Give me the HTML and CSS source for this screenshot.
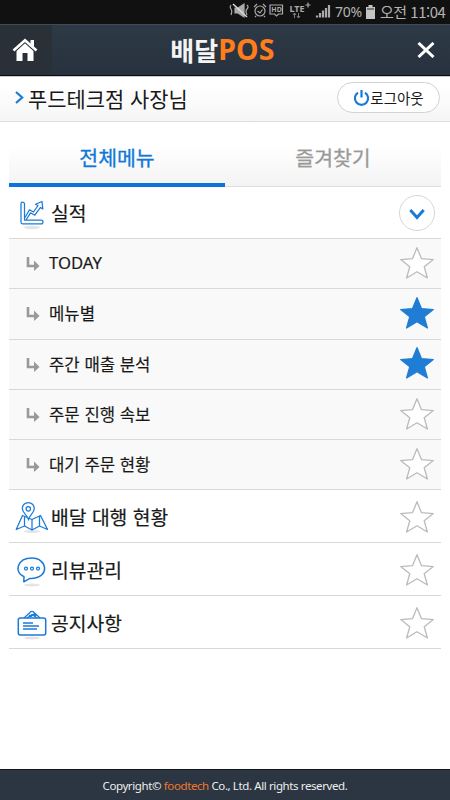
FILE: index.html
```html
<!DOCTYPE html>
<html lang="ko">
<head>
<meta charset="utf-8">
<title>배달POS</title>
<link rel="stylesheet" href="styles.css">
</head>
<body>
<svg class="defs" width="0" height="0" aria-hidden="true">
  <symbol id="star" viewBox="0 0 36 34"><path d="M18 1.700 22.400 12.600 34.300 13.600 25.200 20.800 28.400 32 18 25.800 7.600 32 10.800 20.800 1.700 13.600 13.600 12.600Z" stroke-linejoin="round"/></symbol>
  <symbol id="sub" viewBox="0 0 14 15"><path d="M2 1V10H10" fill="none" stroke="#999" stroke-width="2.600"/><path d="M8 4.500 13.500 10 8 15Z" fill="#999"/></symbol>
</svg>
<div class="app">
  <div class="status">
    <svg width="110" height="24" viewBox="0 0 110 24" fill="none" stroke="#aaa" stroke-width="1.2">
      <path d="M6 8H9L15 4V17L9 13H6Z" fill="#aaa"/><path d="M4 4 18 17" stroke="#ddd" stroke-width="1.5"/><path d="M2 5Q.5 7 2 9T2 15M18 5Q20 7 18 9T18 15"/>
      <circle cx="31" cy="11" r="5"/><path d="M28.500 11 31 13 33.500 9.500M25 7 28 4M34 4 37 7M27 16 26 17M35 16 36 17"/>
      <path d="M41 5H53.500V14H49.500L47.500 16 45.500 14H41Z"/>
      <text x="42.300" y="12.400" class="status-hd">HD</text>
      <text x="60.500" y="11.500" class="status-lte">LTE</text>
      <path d="M76.500 5H81.500M79 2.500V7.500"/>
      <path d="M65.500 18V13M64 15 65.500 13 67 15M69.500 13V18M68 16 69.500 18 71 16" stroke-width=".9" stroke="#888"/>
      <path d="M88 17.500V15.500M91 17.500V13M94 17.500V10.500M97 17.500V8M100 17.500V5" stroke-width="2.200"/>
    </svg>
    <span class="pct">70%</span>
    <svg class="batt" width="9" height="14" viewBox="0 0 9 14"><path d="M2.500 0H6.500V2H9V14H0V2H2.500Z" fill="#c4c4c4"/><path d="M1 3H8V5H1Z" fill="#777"/></svg>
    <span class="clock">오전 11:04</span>
  </div>
  <header class="header">
    <a class="home"><svg width="26" height="24" viewBox="0 0 26 24"><path d="M13 4.500 21.500 12V23H15.500V15H10.500V23H4.500V12Z" fill="#fff"/><path d="M1.500 12.500 13 2 24.500 12.500" fill="none" stroke="#2a3038" stroke-width="5"/><path d="M1.500 12.500 13 2.200 24.500 12.500" fill="none" stroke="#fff" stroke-width="2.600"/><path d="M18.500 2H22V9L18.500 6Z" fill="#fff"/></svg></a>
    <h1 class="logo"><span class="logo-ko">배달</span><span class="logo-en">POS</span></h1>
    <svg class="close" width="18" height="16" viewBox="0 0 18 16"><path d="M1.500 1 16.500 15M16.500 1 1.500 15" stroke="#fff" stroke-width="3"/></svg>
  </header>
  <div class="user">
    <svg width="9" height="13" viewBox="0 0 9 13"><path d="M1 1 7.200 6.500 1 12" fill="none" stroke="#1b7ad6" stroke-width="2.200"/></svg>
    <span class="user-name">푸드테크점 사장님</span>
    <a class="logout"><svg width="17" height="18" viewBox="0 0 17 18" fill="none" stroke="#1b7ad6" stroke-width="2.200"><path d="M5 3.600A6.600 6.600 0 1 0 12 3.600M8.500 1V8.500"/></svg><span>로그아웃</span></a>
  </div>
  <main class="content">
    <nav class="tabs"><a class="tab active">전체메뉴</a><a class="tab">즐겨찾기</a></nav>
    <div class="row head">
      <svg class="icon" width="34" height="34" viewBox="0 0 34 34"><ellipse cx="17" cy="31.500" rx="8" ry="1.800" class="shade"/><path d="M6 7.500Q6 6 7.500 6T9.500 7.500V24H26Q28 24 28 26T26 27.800H7.500Q6 27.800 6 26Z"/><path d="M10 21.500 14.500 13.800 18.500 16 23 9.500 20.500 8.300 27 5.500 27.800 13 25.500 11.400 19.800 19.200 15.500 16.800 11 24"/></svg>
      <span class="label">실적</span>
      <span class="toggle"><svg width="16" height="12" viewBox="0 0 16 12"><path d="M1.300 2 8 9.500 14.700 2" fill="none" stroke="#1b7ad6" stroke-width="3"/></svg></span>
    </div>
    <div class="row sub"><svg class="arrow"><use href="#sub"/></svg><span class="label today">TODAY</span><svg class="star"><use href="#star"/></svg></div>
    <div class="row sub"><svg class="arrow"><use href="#sub"/></svg><span class="label">메뉴별</span><svg class="star on"><use href="#star"/></svg></div>
    <div class="row sub"><svg class="arrow"><use href="#sub"/></svg><span class="label">주간 매출 분석</span><svg class="star on"><use href="#star"/></svg></div>
    <div class="row sub"><svg class="arrow"><use href="#sub"/></svg><span class="label">주문 진행 속보</span><svg class="star"><use href="#star"/></svg></div>
    <div class="row sub"><svg class="arrow"><use href="#sub"/></svg><span class="label">대기 주문 현황</span><svg class="star"><use href="#star"/></svg></div>
    <div class="row main">
      <svg class="icon" width="34" height="34" viewBox="0 0 34 34"><ellipse cx="17" cy="31.500" rx="8" ry="1.500" class="shade"/><path d="M7.500 15.500 1.200 29.500 9.500 26 17 30 24.500 26 32.500 29.500 25.500 15.500 17 19.500 7.500 15.500ZM9.500 17V26M17 20V30M24.500 16.500V26"/><path d="M13.500 20C13 15 7.300 13.500 7.300 8.500A6 6 0 0 1 19.300 8.500C19.300 13.500 14 15 13.500 20Z" fill="#fff"/><circle cx="13.300" cy="8.800" r="2.200"/></svg>
      <span class="label">배달 대행 현황</span><svg class="star"><use href="#star"/></svg>
    </div>
    <div class="row main">
      <svg class="icon" width="34" height="34" viewBox="0 0 34 34"><ellipse cx="17" cy="32" rx="8" ry="1.500" class="shade"/><path d="M9 23.800C-1.500 19.500 2 5 17 5S35.500 24.500 17 25.400H15L8.800 28.800Z" stroke-width="1.500"/><circle cx="11" cy="15.500" r="1.500"/><circle cx="17" cy="15.500" r="1.500"/><circle cx="23" cy="15.500" r="1.500"/></svg>
      <span class="label">리뷰관리</span><svg class="star"><use href="#star"/></svg>
    </div>
    <div class="row main">
      <svg class="icon" width="34" height="34" viewBox="0 0 34 34"><ellipse cx="17" cy="32" rx="8" ry="1.500" class="shade"/><rect x="3.300" y="12" width="27.400" height="17" rx="2" stroke-width="1.500"/><path d="M9 12 15 6.500A2.300 2.300 0 0 1 19 6.500L25 12M12 12 17 8.500 22 12M14 9 16 10.500 19 8 21 10"/><path d="M8 17H18M8 20H24M8 23H22" stroke-width="1.400"/></svg>
      <span class="label">공지사항</span><svg class="star"><use href="#star"/></svg>
    </div>
  </main>
  <footer class="footer"><span>Copyright© <b>foodtech</b> Co., Ltd. All rights reserved.</span></footer>
</div>
</body>
</html>
```

FILE: styles.css
```css
* { box-sizing: border-box; }
body {
  margin: 0;
  background: #fff;
  font-family: "Noto Sans CJK KR", "Noto Sans", sans-serif;
  color: #181818;
}
svg { flex: none; display: block; }
.defs { position: absolute; }
.app { display: flex; flex-direction: column; width: 450px; height: 800px; overflow: hidden; }

.status {
  display: flex; align-items: center; height: 24px; flex: none;
  padding-left: 229px; background: #111; color: #b4b4b4;
  font-size: 15px; line-height: 24px; white-space: nowrap;
}
.status-hd { font: bold 7px "Noto Sans", sans-serif; fill: #aaa; stroke: none; }
.status-lte { font: bold 9px "Noto Sans", sans-serif; fill: #aaa; stroke: none; }
.pct { width: 31px; margin-left: -4px; font-family: "Noto Sans", sans-serif; font-size: 14px; letter-spacing: -.3px; }
.batt { margin-right: 5px; }
.clock { letter-spacing: -.5px; }

.header {
  display: flex; align-items: center; justify-content: space-between; flex: none;
  height: 52px; padding-right: 15px;
  background: linear-gradient(#2d3945, #27323e);
  border-top: 1px solid #404b58; border-bottom: 1px solid #080c14;
}
.home { display: flex; align-items: center; justify-content: center; width: 52px; height: 50px; padding-right: 2px; background: #2a3038; }
.logo { display: flex; align-items: center; margin: 0 24px 0 0; height: 50px; font-weight: bold; line-height: 50px; }
.logo-ko { font-size: 26px; color: #f4f4f4; }
.logo-en { font-family: "Noto Sans", sans-serif; font-size: 28.500px; color: #ff7d1a; letter-spacing: .2px; margin-top: -2px; }

.user {
  display: flex; align-items: center; flex: none; height: 46px; padding: 0 10px 3px 15px;
  background: linear-gradient(#fff 20%, #f5f5f5); border-top: 1px solid #ccc; border-bottom: 1px solid #dedede;
}
.user-name { margin-left: 4px; font-size: 20.900px; line-height: 40px; white-space: nowrap; }
.logout {
  display: flex; align-items: center; justify-content: center; width: 103px; height: 31px; margin-left: auto;
  border: 1px solid #d2d2d2; border-radius: 16px; background: #fff; font-size: 14.500px; line-height: 28px;
}

.content { flex: 1; margin: 14px 9px 0; }
.tabs { display: flex; height: 51px; background: linear-gradient(#fff 20%, #f3f3f3); }
.tab {
  flex: 1; text-align: center; font-size: 20.500px; line-height: 43px; color: #999;
  border-bottom: 1px solid #ddd; -webkit-text-stroke: .3px;
}
.active { color: #1178d8; border-bottom: 4px solid #0b74d8; }
.row { display: flex; align-items: center; height: 52.700px; padding: 0 6px; border-bottom: 1px solid #d8d8d8; }
.row .label { font-size: 19.300px; line-height: 30px; -webkit-text-stroke: .2px; margin-left: 2px; white-space: nowrap; }
.head { height: 52px; }
.main { padding-top: 2px; }
.sub { height: 50.300px; padding-left: 17px; background: #f9f9f9; }
.sub .label { font-size: 16.700px; margin: -1px 0 0 9px; -webkit-text-stroke: .15px; }
.sub .today { font-family: "Noto Sans", "Noto Sans CJK KR", sans-serif; font-size: 16.700px; letter-spacing: 0; }
.arrow { width: 14px; height: 15px; }
.icon { fill: none; stroke: #1b7ad6; stroke-width: 1.250; stroke-linejoin: round; }
.shade { fill: #e4e4e4; stroke: none; }
.star { width: 36px; height: 34px; margin: 0 0 2px auto; fill: #fff; stroke: #bbb; stroke-width: 1.300; }
.main .star { margin-bottom: 0; }
.on { fill: #207dd5; stroke: #207dd5; }
.toggle {
  display: flex; align-items: center; justify-content: center; width: 36px; height: 36px;
  margin-left: auto; padding-top: 3px; border: 1px solid #d6d6d6; border-radius: 50%;
}

.footer {
  flex: none; height: 31px; background: #2b3642; border-top: 1px solid #10151c;
  color: #eee; font: 11.500px/31px "Noto Sans", sans-serif; letter-spacing: -.39px; text-align: center; white-space: nowrap;
}
.footer b { font-weight: normal; color: #f0792a; }
```
